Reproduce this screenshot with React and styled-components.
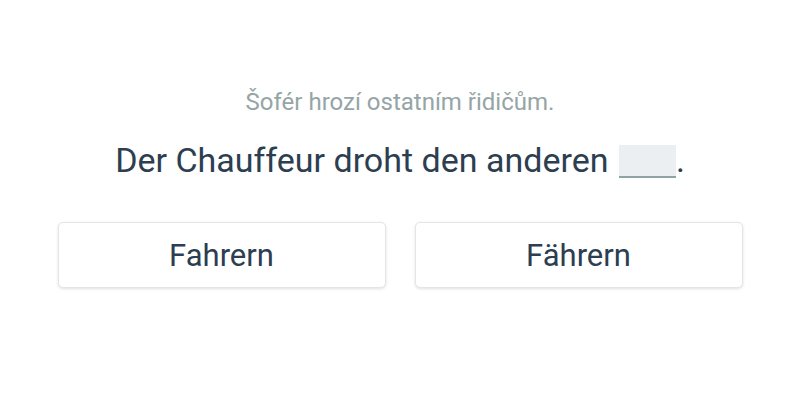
import React from 'react'
import styled, { createGlobalStyle } from 'styled-components'

const GlobalStyle = createGlobalStyle`
  body {
    margin: 0;
    background: #ffffff;
    font-family: Roboto, "Noto Sans", sans-serif;
  }
`

const Page = styled.div({
  width: '800px',
  height: '400px',
  boxSizing: 'border-box',
  paddingTop: '88px',
  display: 'flex',
  flexDirection: 'column',
  alignItems: 'center',
})

const Hint = styled.div({
  fontSize: '24px',
  lineHeight: '28px',
  color: '#95a5a6',
  textAlign: 'center',
})

const Sentence = styled.div({
  marginTop: '24px',
  fontSize: '34px',
  lineHeight: '40px',
  color: '#2c3e50',
  textAlign: 'center',
})

const Blank = styled.span({
  display: 'inline-block',
  width: '57px',
  height: '31px',
  verticalAlign: '-6px',
  background: '#eceff1',
  borderBottom: '2px solid #8fa3a7',
  marginLeft: '2px',
})

const Choices = styled.div({
  marginTop: '42px',
  display: 'flex',
  gap: '29px',
})

const Choice = styled.button({
  width: '328px',
  height: '66px',
  background: '#ffffff',
  border: '1px solid #e3e6e8',
  borderRadius: '5px',
  boxShadow: '0 1px 3px rgba(0,0,0,0.12)',
  fontFamily: 'Roboto, "Noto Sans", sans-serif',
  fontSize: '31px',
  color: '#2c3e50',
  cursor: 'pointer',
  padding: 0,
})

const App = () => (
  <>
    <GlobalStyle />
    <Page>
      <Hint>Šofér hrozí ostatním řidičům.</Hint>
      <Sentence>
        Der Chauffeur droht den anderen <Blank />.
      </Sentence>
      <Choices>
        <Choice>Fahrern</Choice>
        <Choice>Fährern</Choice>
      </Choices>
    </Page>
  </>
)

export default App
